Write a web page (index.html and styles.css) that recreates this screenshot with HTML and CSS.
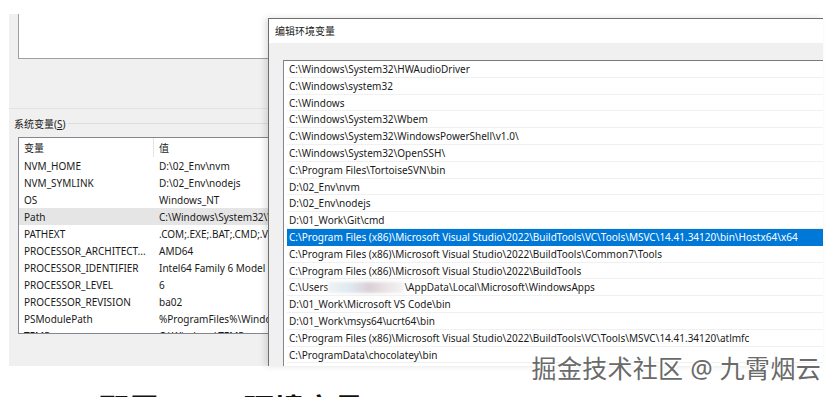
FILE: index.html
```html
<!DOCTYPE html>
<html>

<head>
	<meta charset="utf-8">
	<link rel="stylesheet" href="styles.css">
</head>

<body>
	<div class="shot">
		<div class="envwin">
			<div class="uservars"></div>
			<div class="divider"></div>
			<div class="group_label"><span>系统变量(<u>S</u>)</span><div class="group_line"></div></div>
			<div class="vartable">
				<div class="vrow vhead"><div class="vname">变量</div><div class="vval">值</div></div>
				<div class="vrow"><div class="vname">NVM_HOME</div><div class="vval">D:\02_Env\nvm</div></div>
				<div class="vrow"><div class="vname">NVM_SYMLINK</div><div class="vval">D:\02_Env\nodejs</div></div>
				<div class="vrow"><div class="vname">OS</div><div class="vval">Windows_NT</div></div>
				<div class="vrow hover"><div class="vname">Path</div><div class="vval">C:\Windows\System32\Wbem;C:\Windows</div></div>
				<div class="vrow"><div class="vname">PATHEXT</div><div class="vval">.COM;.EXE;.BAT;.CMD;.VBS;.VBE</div></div>
				<div class="vrow"><div class="vname">PROCESSOR_ARCHITECT...</div><div class="vval">AMD64</div></div>
				<div class="vrow"><div class="vname">PROCESSOR_IDENTIFIER</div><div class="vval">Intel64 Family 6 Model 154</div></div>
				<div class="vrow"><div class="vname">PROCESSOR_LEVEL</div><div class="vval">6</div></div>
				<div class="vrow"><div class="vname">PROCESSOR_REVISION</div><div class="vval">ba02</div></div>
				<div class="vrow"><div class="vname">PSModulePath</div><div class="vval">%ProgramFiles%\WindowsPowerShell</div></div>
				<div class="vrow"><div class="vname">TEMP</div><div class="vval">C:\Windows\TEMP</div></div>
			</div>
		</div>

		<div class="dialog">
			<div class="dialog_title">编辑环境变量</div>
			<div class="dialog_body">
				<div class="pathlist">
					<div class="pitem">C:\Windows\System32\HWAudioDriver</div>
					<div class="pitem">C:\Windows\system32</div>
					<div class="pitem">C:\Windows</div>
					<div class="pitem">C:\Windows\System32\Wbem</div>
					<div class="pitem">C:\Windows\System32\WindowsPowerShell\v1.0\</div>
					<div class="pitem">C:\Windows\System32\OpenSSH\</div>
					<div class="pitem">C:\Program Files\TortoiseSVN\bin</div>
					<div class="pitem">D:\02_Env\nvm</div>
					<div class="pitem">D:\02_Env\nodejs</div>
					<div class="pitem">D:\01_Work\Git\cmd</div>
					<div class="pitem selected">C:\Program Files (x86)\Microsoft Visual Studio\2022\BuildTools\VC\Tools\MSVC\14.41.34120\bin\Hostx64\x64</div>
					<div class="pitem">C:\Program Files (x86)\Microsoft Visual Studio\2022\BuildTools\Common7\Tools</div>
					<div class="pitem">C:\Program Files (x86)\Microsoft Visual Studio\2022\BuildTools</div>
					<div class="pitem">C:\Users<span class="redacted"></span>\AppData\Local\Microsoft\WindowsApps</div>
					<div class="pitem">D:\01_Work\Microsoft VS Code\bin</div>
					<div class="pitem">D:\01_Work\msys64\ucrt64\bin</div>
					<div class="pitem">C:\Program Files (x86)\Microsoft Visual Studio\2022\BuildTools\VC\Tools\MSVC\14.41.34120\atlmfc</div>
					<div class="pitem">C:\ProgramData\chocolatey\bin</div>
				</div>
			</div>
		</div>

		<div class="watermark">掘金技术社区 @ 九霄烟云</div>
	</div>

	<h2 class="next_heading">5、配置 Path 环境变量</h2>
</body>

</html>
```

FILE: styles.css
```css
body {
	margin: 0;
	width: 835px;
	height: 397px;
	overflow: hidden;
	background: #fff;
	font-family: "Noto Sans", "Noto Sans CJK SC", sans-serif;
	font-size: 10px;
	color: #000;
}
.shot {
	position: relative;
	margin: 14px 0 0 9px;
	height: 352px;
}

/* system properties window (behind) */
.envwin {
	width: 290px;
	height: 352px;
	background: #f0f0f0;
	overflow: hidden;
}
.uservars {
	margin-left: 9px;
	height: 44px;
	background: #fff;
	border-left: 1px solid #a0a0a0;
	border-bottom: 1px solid #a0a0a0;
}
.divider {
	margin-top: 49px;
	height: 1px;
	background: #e2e2e2;
}
.group_label {
	display: flex;
	align-items: center;
	height: 16px;
	margin-top: 6px;
	padding-left: 5px;
	color: #1a1a1a;
}
.group_line {
	flex: 1;
	height: 1px;
	background: #dcdcdc;
	margin-left: 2px;
}
.vartable {
	margin: 6px 0 0 9px;
	height: 195px;
	background: #fff;
	border: 1px solid #828790;
	border-right: none;
	overflow: hidden;
}
.vrow {
	display: flex;
	height: 17px;
	padding-top: 1px;
	box-sizing: border-box;
	align-items: center;
	white-space: nowrap;
	color: #1a1a1a;
}
.vrow.vhead {
	height: 19px;
	padding-top: 0;
}
.vrow.hover {
	background: #e5e5e5;
}
.vname {
	width: 135px;
	padding-left: 5px;
	box-sizing: border-box;
	flex: none;
	overflow: hidden;
}
.vhead .vname {
	border-right: 1px solid #e5e5e5;
	height: 19px;
	line-height: 20px;
}
.vhead .vval {
	line-height: 20px;
}
.vval {
	padding-left: 5px;
}

/* edit dialog window on top */
.dialog {
	position: absolute;
	left: 259px;
	top: 4px;
	width: 555px;
	height: 348px;
	border-top: 1px solid #6f6f6f;
	border-left: 1px solid #6f6f6f;
	box-sizing: border-box;
	background: #f0f0f0;
	box-shadow: -3px 0 6px rgba(0, 0, 0, 0.12);
	overflow: hidden;
}
.dialog_title {
	height: 24px;
	line-height: 24px;
	padding-left: 6px;
	background: #fff;
	color: #1a1a1a;
}
.dialog_body {
	padding: 17px 0 0 14px;
}
.pathlist {
	background: #fff;
	border-top: 1px solid #7a7a7a;
	border-left: 1px solid #828790;
	padding-left: 3px;
	height: 320px;
}
.pitem {
	height: 16.8px;
	line-height: 17px;
	padding-left: 2px;
	box-sizing: border-box;
	border-bottom: 1px solid #f0f0f0;
	white-space: nowrap;
	color: #1a1a1a;
}
.pitem.selected {
	background: #0078d7;
	color: #fff;
	border-bottom-color: #0078d7;
}
.redacted {
	display: inline-block;
	width: 76px;
	height: 11px;
	vertical-align: -2px;
	background: linear-gradient(to right, #eef3f6 0%, #dfe8ee 30%, #d9d0d6 55%, #e9e2e4 75%, #f4f4f4 100%);
	filter: blur(1.5px);
}

.watermark {
	position: absolute;
	right: 14px;
	top: 340px;
	font-size: 25px;
	line-height: 28px;
	color: #6a6a6a;
	letter-spacing: 0.3px;
	text-shadow: 1px 1px 0 #fff, -1px -1px 0 #fff, 1px -1px 0 #fff, -1px 1px 0 #fff, 0 0 3px #fff;
}

.next_heading {
	margin: 23px 0 0 52px;
	font-size: 30px;
	line-height: 40px;
	font-weight: bold;
	color: #111;
}
```
